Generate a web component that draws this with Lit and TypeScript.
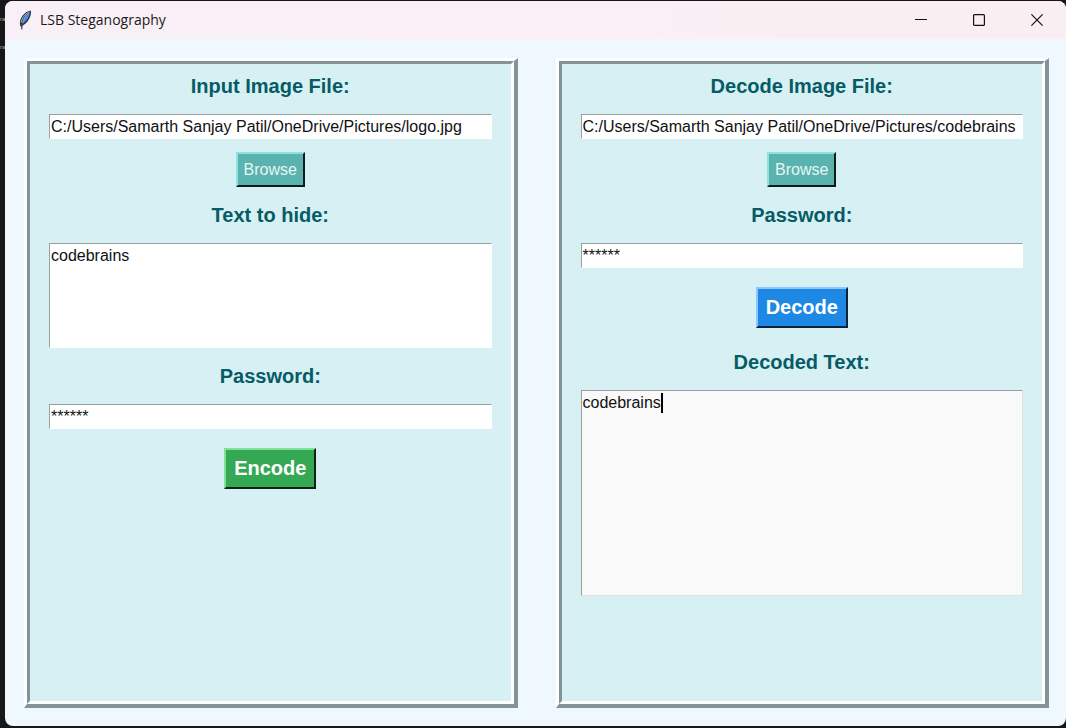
import { LitElement, html, css, svg } from "lit";
import { customElement, property, state } from "lit/decorators.js";

const feather = svg`
  <path d="M12.8 0.4 C8.4 1 3.4 5.4 2.2 10.6 C1.6 13 1.8 15 2.8 17 L6 14.8 C9.2 12.6 11.2 9.8 12.2 6.6 C12.9 4.2 13.2 2.2 12.8 0.4 Z" fill="#30343f"/>
  <path d="M11.8 1.8 C8.6 3.4 5.2 7.4 4.6 11 L4.4 14 C7.6 12 9.8 9 11 6 Z" fill="#4384d6"/>
  <path d="M11.2 1.8 C7 4.2 3.6 8.4 3.2 12.6" fill="none" stroke="#a4b2c4" stroke-width="1"/>
  <path d="M10.6 3.4 C8 6 5.8 9.4 4.4 13.6" fill="none" stroke="#7fb4f0" stroke-width="0.8"/>
  <path d="M4.4 13 L3.6 19.4" fill="none" stroke="#4a4c52" stroke-width="1.3"/>`;

@customElement("title-bar")
export class TitleBar extends LitElement {
  @property() heading = "";

  static styles = css`
    :host {
      display: flex;
      align-items: center;
      height: 38px;
      padding-left: 13px;
      background: linear-gradient(90deg, #f9eff7, #f9eff2);
      font: 14px/18px "Open Sans", "Noto Sans", sans-serif;
      color: #1b1b1b;
    }
    .logo {
      width: 15px;
      height: 20px;
      margin-right: 7px;
    }
    .heading {
      flex: 1;
      margin: 0;
      font: inherit;
    }
    .control {
      display: grid;
      place-items: center;
      width: 58px;
      height: 38px;
      padding: 0;
      border: 0;
      background: none;
    }
    .glyph {
      width: 12px;
      height: 12px;
      fill: none;
      stroke: #111;
    }
  `;

  render() {
    return html`
      <svg class="logo" viewBox="0 0 15 20" aria-hidden="true">${feather}</svg>
      <h1 class="heading">${this.heading}</h1>
      <button class="control" aria-label="Minimize">
        <svg class="glyph" viewBox="0 0 12 12"><path d="M0 5.5H12" /></svg>
      </button>
      <button class="control" aria-label="Maximize">
        <svg class="glyph" viewBox="0 0 12 12">
          <rect x="0.6" y="0.6" width="10.8" height="10.8" rx="1" stroke-width="1.2" />
        </svg>
      </button>
      <button class="control" aria-label="Close">
        <svg class="glyph" viewBox="0 0 12 12">
          <path d="M0.4 0.4L11.6 11.6M11.6 0.4L0.4 11.6" stroke-width="1.2" />
        </svg>
      </button>
    `;
  }
}

@customElement("app-root")
export class AppRoot extends LitElement {
  @state() private source = "C:/Users/Samarth Sanjay Patil/OneDrive/Pictures/logo.jpg";
  @state() private encoded = "C:/Users/Samarth Sanjay Patil/OneDrive/Pictures/codebrains";
  @state() private message = "codebrains";
  @state() private secret = "******";

  static styles = css`
    :host {
      display: flex;
      box-sizing: border-box;
      height: 100vh;
      padding: 1px 0 2px;
      background: #171717;
      font: 16px "Liberation Sans", Arial, sans-serif;
      overflow: hidden;
    }
    .behind {
      width: 5px;
      padding-top: 4px;
      box-sizing: border-box;
      color: #b3a48c;
      font-size: 6px;
      line-height: 28px;
    }
    .window {
      flex: 1;
      min-width: 0;
      display: flex;
      flex-direction: column;
      border-radius: 8px;
      overflow: hidden;
      background: #eff7ff;
    }
    .panels {
      flex: 1;
      display: grid;
      grid-template-columns: 1fr 1fr;
      gap: 38px;
      padding: 19px 17px 18px 19px;
    }
    .frame {
      display: grid;
      min-width: 0;
      border: 3px solid;
      border-width: 3px 4px 4px 3px;
      border-color: #fff #839496 #839496 #fff;
    }
    .panel {
      display: flex;
      flex-direction: column;
      align-items: center;
      min-width: 0;
      padding: 10px 19px;
      border: 3px solid;
      border-color: #839496 #fff #fff #839496;
      background: #d7f0f3;
    }
    .label {
      font-size: 20px;
      line-height: 24px;
      font-weight: bold;
      color: #055b66;
      margin-bottom: 16px;
    }
    .field {
      display: block;
      box-sizing: border-box;
      width: 100%;
      margin: 0;
      padding: 0 0 0 1px;
      border: 1px solid;
      border-color: #9a9fa0 #fff #fff #9a9fa0;
      border-radius: 0;
      outline: 0;
      background: #fff;
      color: #111;
      font: inherit;
      line-height: 24px;
      resize: none;
    }
    .line {
      height: 25px;
    }
    .message {
      height: 105px;
      margin-bottom: 16px;
    }
    .result-box {
      position: relative;
      width: 100%;
    }
    .result {
      height: 206px;
      background: #f9f9f9;
      border-color: #9a9fa0 #e3e3e3 #e3e3e3 #9a9fa0;
    }
    .caret {
      position: absolute;
      left: 80px;
      top: 3px;
      width: 2px;
      height: 20px;
      background: #000;
    }
    .button {
      box-sizing: border-box;
      border: 2px solid;
      border-radius: 0;
      font: inherit;
      padding: 0 6px;
      color: #fff;
    }
    .browse {
      height: 35px;
      margin: 13px 0 16px;
      background: #5ab3af;
      border-color: #8fe3df #0c1c1c #0c1c1c #8fe3df;
      color: #e6f6f4;
    }
    .action {
      height: 41px;
      margin: 19px 0 22px;
      padding: 0 8px;
      font-size: 20px;
      font-weight: bold;
    }
    .encode {
      background: #34a853;
      border-color: #7fe09a #0b2412 #0b2412 #7fe09a;
    }
    .decode {
      background: #1e88e5;
      border-color: #8cc8ff #0b2238 #0b2238 #8cc8ff;
    }
  `;

  render() {
    return html`
      <div class="behind" aria-hidden="true">ra<br />ra</div>
      <main class="window">
        <title-bar heading="LSB Steganography"></title-bar>
        <div class="panels">
          <div class="frame">
            <section class="panel">
              <label class="label" for="source">Input Image File:</label>
              <input class="field line" id="source" .value=${this.source} />
              <button class="button browse">Browse</button>
              <label class="label" for="message">Text to hide:</label>
              <textarea class="field message" id="message" .value=${this.message}></textarea>
              <label class="label" for="lock">Password:</label>
              <input class="field line" id="lock" .value=${this.secret} />
              <button class="button action encode">Encode</button>
            </section>
          </div>
          <div class="frame">
            <section class="panel">
              <label class="label" for="encoded">Decode Image File:</label>
              <input class="field line" id="encoded" .value=${this.encoded} />
              <button class="button browse">Browse</button>
              <label class="label" for="unlock">Password:</label>
              <input class="field line" id="unlock" .value=${this.secret} />
              <button class="button action decode">Decode</button>
              <label class="label" for="result">Decoded Text:</label>
              <div class="result-box">
                <textarea class="field result" id="result" .value=${this.message}></textarea>
                <span class="caret"></span>
              </div>
            </section>
          </div>
        </div>
      </main>
    `;
  }
}
